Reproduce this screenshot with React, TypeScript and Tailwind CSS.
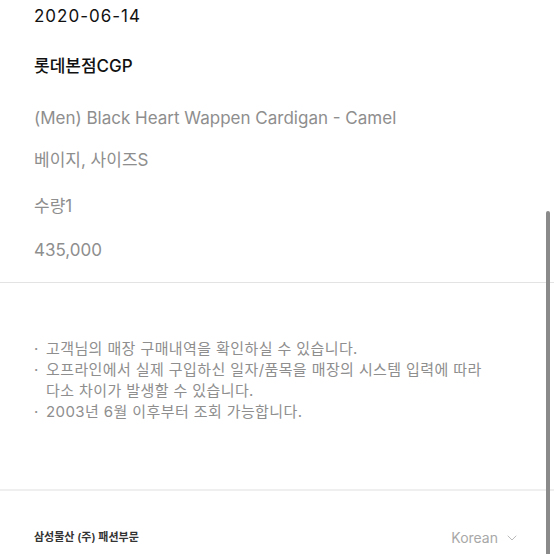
import { ChevronDown } from 'lucide-react';

const font = { fontFamily: 'Inter, "Noto Sans CJK KR", sans-serif' };

export default function App() {
  return (
    <div className="relative h-[554px] w-[554px] overflow-hidden bg-white" style={font}>
      {/* purchase info */}
      <div className="flex flex-col px-[34px] pt-[4px] text-[17px] leading-[24px]">
        <div className="tracking-[1px] text-[#111]">2020-06-14</div>
        <div className="mt-[26px] font-medium text-[#111]">롯데본점CGP</div>
        <div className="mt-[28px] text-[#8e8e8e]">(Men) Black Heart Wappen Cardigan - Camel</div>
        <div className="mt-[18px] text-[#8e8e8e]">베이지, 사이즈S</div>
        <div className="mt-[22px] text-[#8e8e8e]">수량1</div>
        <div className="mt-[20px] text-[#8e8e8e]">435,000</div>
      </div>

      <div className="mt-[20px] h-px bg-[#e3e3e3]" />

      {/* notices */}
      <ul className="flex flex-col px-[34px] pt-[55px] text-[15px] leading-[21px] tracking-[0.4px] text-[#8e8e8e]">
        <li className="flex">
          <span className="w-[12px] shrink-0">·</span>
          <span>고객님의 매장 구매내역을 확인하실 수 있습니다.</span>
        </li>
        <li className="flex">
          <span className="w-[12px] shrink-0">·</span>
          <span>
            오프라인에서 실제 구입하신 일자/품목을 매장의 시스템 입력에 따라
            <br />
            다소 차이가 발생할 수 있습니다.
          </span>
        </li>
        <li className="flex">
          <span className="w-[12px] shrink-0">·</span>
          <span>2003년 6월 이후부터 조회 가능합니다.</span>
        </li>
      </ul>

      <div className="mt-[67px] h-[2px] bg-[#efefef]" />

      {/* footer */}
      <div className="flex items-center justify-between px-[34px] pt-[36px]">
        <span className="text-[11px] font-semibold text-[#333]">삼성물산 (주) 패션부문</span>
        <span className="flex items-center gap-[6px] text-[14px] text-[#a8a8a8]">
          Korean
          <ChevronDown size={16} strokeWidth={1.2} />
        </span>
      </div>

      {/* scrollbar */}
      <div className="absolute right-[4px] top-[211px] h-[360px] w-[4px] rounded-full bg-[#8a8a8a]" />
    </div>
  );
}
